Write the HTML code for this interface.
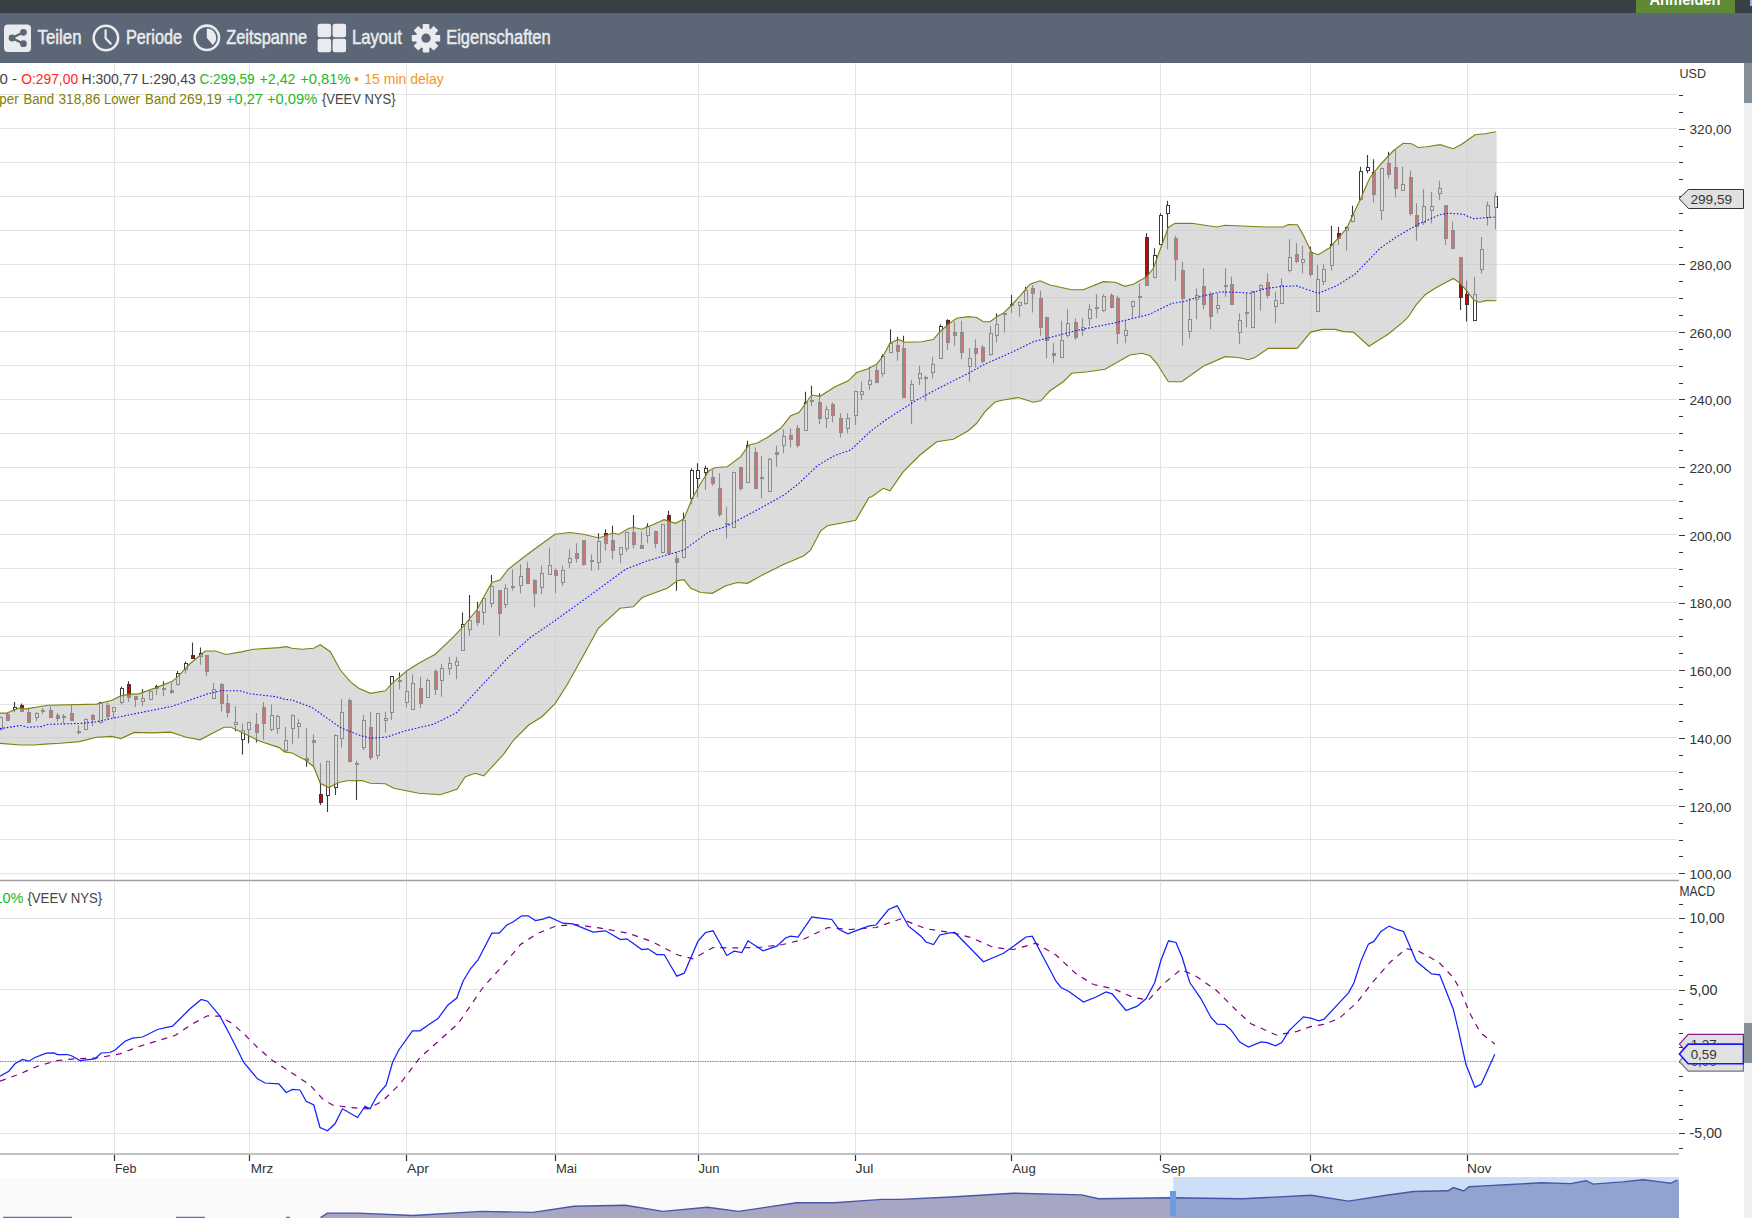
<!DOCTYPE html><html><head><meta charset="utf-8"><style>html,body{margin:0;padding:0;overflow:hidden;background:#fff}svg{display:block}text{font-family:"Liberation Sans", sans-serif}</style></head><body>
<svg width="1752" height="1218" viewBox="0 0 1752 1218">
<rect x="0" y="0" width="1752" height="1218" fill="#fff"/>
<path d="M0 873.5H1677 M0 839.5H1677 M0 805.5H1677 M0 771.5H1677 M0 737.5H1677 M0 704.5H1677 M0 670.5H1677 M0 636.5H1677 M0 602.5H1677 M0 568.5H1677 M0 534.5H1677 M0 500.5H1677 M0 467.5H1677 M0 433.5H1677 M0 399.5H1677 M0 365.5H1677 M0 331.5H1677 M0 297.5H1677 M0 264.5H1677 M0 230.5H1677 M0 196.5H1677 M0 162.5H1677 M0 128.5H1677 M0 94.5H1677 M114.5 63V880 M249.5 63V880 M406.5 63V880 M555.5 63V880 M698.5 63V880 M855.5 63V880 M1011.5 63V880 M1160.5 63V880 M1310.5 63V880 M1467.5 63V880" stroke="#e4e4e4" stroke-width="1" fill="none"/>
<path d="M0.5 716.6V730.3 M7.5 713.1V720.9 M14.5 701.9V712.2 M21.5 703.6V712.2 M28.5 708.8V723.4 M36.5 712.2V720.9 M42.5 707.9V714.0 M50.5 706.2V717.4 M57.5 713.1V721.7 M63.5 714.0V723.4 M71.5 705.3V720.9 M78.5 725.2V734.7 M85.5 718.3V730.3 M92.5 714.0V726.0 M100.5 701.9V723.4 M107.5 702.8V719.1 M113.5 707.1V718.3 M121.5 686.4V704.5 M128.5 681.2V701.9 M135.5 695.9V707.1 M142.5 689.0V706.2 M150.5 690.7V700.2 M156.5 684.7V695.0 M163.5 681.2V695.9 M171.5 682.9V694.1 M177.5 670.9V685.5 M185.5 661.4V673.4 M192.5 642.4V657.9 M200.5 647.6V664.8 M206.5 655.3V676.0 M213.5 682.9V698.4 M221.5 682.9V711.4 M227.5 694.1V717.4 M235.5 706.2V731.2 M242.5 723.4V754.5 M248.5 721.7V743.3 M256.5 713.1V742.4 M263.5 701.9V739.8 M271.5 704.5V731.2 M277.5 714.8V733.8 M285.5 726.9V751.9 M292.5 714.2V744.2 M298.5 719.2V738.3 M306.5 728.3V766.7 M313.5 734.2V766.7 M320.5 763.3V805.0 M327.5 760.8V812.0 M335.5 734.2V795.0 M341.5 699.2V747.5 M349.5 698.3V762.5 M356.5 760.8V800.0 M363.5 715.0V750.0 M370.5 711.7V760.0 M377.5 713.3V759.2 M385.5 711.7V732.5 M391.5 676.7V720.0 M399.5 672.5V689.2 M406.5 671.7V707.5 M412.5 674.2V710.0 M420.5 676.7V708.3 M427.5 678.3V697.5 M435.5 669.2V695.0 M441.5 664.2V696.7 M449.5 656.7V675.0 M456.5 656.7V679.2 M462.5 612.5V650.8 M469.5 595.0V635.8 M477.5 601.7V625.8 M483.5 597.5V625.0 M491.5 575.0V607.5 M499.5 590.0V635.8 M505.5 584.2V608.3 M512.5 569.2V590.8 M520.5 564.2V593.3 M527.5 561.7V583.3 M534.5 579.2V607.5 M541.5 565.8V594.2 M549.5 547.5V575.0 M555.5 568.3V593.3 M562.5 565.8V585.8 M569.5 549.2V568.3 M576.5 543.3V562.5 M583.5 540.8V565.8 M591.5 554.2V570.8 M598.5 533.3V570.0 M605.5 529.2V550.8 M612.5 525.8V559.2 M620.5 547.5V563.3 M626.5 531.7V551.7 M633.5 515.0V548.3 M641.5 531.7V548.3 M647.5 523.3V543.3 M655.5 530.8V548.3 M662.5 524.2V553.3 M668.5 510.8V553.3 M676.5 551.7V590.8 M683.5 512.5V558.3 M691.5 468.3V504.2 M697.5 463.3V497.5 M705.5 465.8V490.0 M712.5 470.0V485.8 M719.5 473.3V516.7 M726.5 506.7V538.3 M733.5 471.7V528.3 M740.5 466.7V490.8 M747.5 440.8V483.3 M755.5 447.5V488.3 M761.5 455.8V498.3 M769.5 457.5V491.7 M776.5 445.8V466.7 M783.5 429.2V453.3 M790.5 428.3V447.5 M797.5 425.0V447.5 M805.5 391.7V430.8 M811.5 385.8V405.8 M819.5 393.3V424.2 M826.5 405.8V428.3 M832.5 402.5V422.5 M840.5 413.3V437.5 M847.5 413.3V433.3 M855.5 390.8V425.0 M861.5 381.7V400.0 M869.5 366.7V390.0 M876.5 365.8V383.3 M882.5 354.2V376.7 M890.5 329.2V353.3 M897.5 336.7V360.8 M903.5 335.8V398.3 M911.5 380.0V424.2 M919.5 365.8V385.0 M925.5 375.8V400.8 M932.5 356.7V378.3 M940.5 324.2V358.3 M947.5 319.2V350.0 M954.5 321.7V345.8 M961.5 320.8V359.2 M969.5 348.3V381.7 M975.5 339.2V367.5 M982.5 345.0V363.3 M990.5 325.8V355.8 M996.5 313.3V342.5 M1004.5 313.3V332.5 M1011.5 295.0V313.3 M1019.5 301.7V316.7 M1025.5 286.7V305.0 M1032.5 285.0V312.5 M1040.5 290.8V335.8 M1046.5 316.7V358.3 M1053.5 343.3V363.3 M1061.5 320.8V357.5 M1067.5 309.2V337.5 M1075.5 318.3V340.0 M1082.5 318.3V335.8 M1089.5 304.2V325.8 M1096.5 294.2V318.3 M1103.5 294.2V311.7 M1111.5 293.3V308.3 M1117.5 295.8V344.2 M1125.5 320.0V343.3 M1132.5 300.8V318.3 M1139.5 283.3V316.7 M1146.5 233.3V285.0 M1154.5 248.3V278.3 M1160.5 213.3V244.2 M1167.5 200.8V249.2 M1175.5 235.8V280.8 M1182.5 261.7V345.8 M1189.5 298.3V338.3 M1196.5 288.3V319.2 M1203.5 268.3V309.2 M1210.5 291.7V329.2 M1217.5 293.3V313.3 M1225.5 268.3V296.7 M1231.5 276.7V305.0 M1239.5 313.3V344.2 M1246.5 293.3V327.5 M1252.5 290.8V328.3 M1260.5 284.2V310.8 M1267.5 273.3V298.3 M1275.5 291.7V323.3 M1281.5 278.3V304.2 M1289.5 239.2V272.5 M1296.5 243.3V263.3 M1302.5 245.8V273.3 M1310.5 246.7V277.5 M1317.5 265.0V311.7 M1323.5 264.2V285.0 M1331.5 225.8V270.8 M1338.5 226.7V245.0 M1346.5 226.7V250.8 M1352.5 205.8V222.5 M1360.5 166.7V200.8 M1367.5 155.0V173.3 M1373.5 159.2V202.5 M1381.5 167.5V220.0 M1388.5 151.7V178.3 M1395.5 149.2V197.5 M1402.5 166.7V190.0 M1410.5 170.8V215.8 M1416.5 203.3V240.8 M1423.5 189.2V225.0 M1431.5 191.7V223.3 M1439.5 180.8V200.0 M1445.5 205.8V245.0 M1452.5 221.7V248.3 M1460.5 257.0V310.0 M1466.5 280.5V321.5 M1474.5 276.8V320.0 M1481.5 237.0V273.5 M1487.5 201.7V225.8 M1495.5 192.5V229.2" stroke="#3a3a3a" stroke-width="1.1" fill="none"/>
<g fill="#fff" stroke="#3a3a3a" stroke-width="1"><rect x="-0.5" y="717.5" width="3" height="12"/><rect x="13.5" y="707.5" width="3" height="2"/><rect x="35.5" y="713.5" width="3" height="4"/><rect x="41.5" y="710.5" width="3" height="1"/><rect x="62.5" y="716.5" width="3" height="1"/><rect x="77.5" y="731.5" width="3" height="1"/><rect x="84.5" y="719.5" width="3" height="10"/><rect x="99.5" y="702.5" width="3" height="20"/><rect x="112.5" y="707.5" width="3" height="4"/><rect x="120.5" y="688.5" width="3" height="14"/><rect x="141.5" y="698.5" width="3" height="3"/><rect x="149.5" y="691.5" width="3" height="8"/><rect x="162.5" y="688.5" width="3" height="1"/><rect x="176.5" y="673.5" width="3" height="11"/><rect x="184.5" y="663.5" width="3" height="6"/><rect x="199.5" y="653.5" width="3" height="3"/><rect x="212.5" y="689.5" width="3" height="9"/><rect x="234.5" y="722.5" width="3" height="2"/><rect x="241.5" y="730.5" width="3" height="9"/><rect x="247.5" y="722.5" width="3" height="7"/><rect x="270.5" y="715.5" width="3" height="14"/><rect x="276.5" y="716.5" width="3" height="12"/><rect x="284.5" y="740.5" width="3" height="10"/><rect x="291.5" y="715.5" width="3" height="13"/><rect x="297.5" y="723.5" width="3" height="3"/><rect x="326.5" y="761.5" width="3" height="34"/><rect x="334.5" y="735.5" width="3" height="52"/><rect x="340.5" y="712.5" width="3" height="26"/><rect x="355.5" y="763.5" width="3" height="1"/><rect x="362.5" y="720.5" width="3" height="27"/><rect x="376.5" y="713.5" width="3" height="42"/><rect x="384.5" y="718.5" width="3" height="2"/><rect x="390.5" y="676.5" width="3" height="36"/><rect x="398.5" y="680.5" width="3" height="1"/><rect x="405.5" y="691.5" width="3" height="11"/><rect x="411.5" y="683.5" width="3" height="26"/><rect x="426.5" y="680.5" width="3" height="17"/><rect x="440.5" y="668.5" width="3" height="12"/><rect x="448.5" y="663.5" width="3" height="5"/><rect x="455.5" y="661.5" width="3" height="4"/><rect x="461.5" y="624.5" width="3" height="26"/><rect x="468.5" y="620.5" width="3" height="9"/><rect x="482.5" y="598.5" width="3" height="14"/><rect x="490.5" y="586.5" width="3" height="17"/><rect x="504.5" y="588.5" width="3" height="16"/><rect x="511.5" y="586.5" width="3" height="1"/><rect x="519.5" y="576.5" width="3" height="9"/><rect x="540.5" y="573.5" width="3" height="14"/><rect x="548.5" y="565.5" width="3" height="9"/><rect x="561.5" y="570.5" width="3" height="12"/><rect x="568.5" y="558.5" width="3" height="4"/><rect x="590.5" y="560.5" width="3" height="1"/><rect x="597.5" y="541.5" width="3" height="21"/><rect x="619.5" y="547.5" width="3" height="7"/><rect x="625.5" y="532.5" width="3" height="16"/><rect x="646.5" y="526.5" width="3" height="9"/><rect x="661.5" y="524.5" width="3" height="28"/><rect x="682.5" y="520.5" width="3" height="37"/><rect x="690.5" y="470.5" width="3" height="28"/><rect x="696.5" y="470.5" width="3" height="8"/><rect x="704.5" y="468.5" width="3" height="4"/><rect x="725.5" y="523.5" width="3" height="1"/><rect x="732.5" y="472.5" width="3" height="55"/><rect x="746.5" y="445.5" width="3" height="37"/><rect x="760.5" y="477.5" width="3" height="1"/><rect x="768.5" y="459.5" width="3" height="32"/><rect x="782.5" y="436.5" width="3" height="9"/><rect x="804.5" y="402.5" width="3" height="28"/><rect x="810.5" y="400.5" width="3" height="1"/><rect x="825.5" y="409.5" width="3" height="9"/><rect x="846.5" y="418.5" width="3" height="10"/><rect x="854.5" y="391.5" width="3" height="24"/><rect x="860.5" y="391.5" width="3" height="3"/><rect x="868.5" y="380.5" width="3" height="4"/><rect x="881.5" y="356.5" width="3" height="17"/><rect x="889.5" y="343.5" width="3" height="9"/><rect x="910.5" y="384.5" width="3" height="16"/><rect x="918.5" y="373.5" width="3" height="5"/><rect x="924.5" y="377.5" width="3" height="1"/><rect x="931.5" y="364.5" width="3" height="8"/><rect x="939.5" y="326.5" width="3" height="32"/><rect x="968.5" y="358.5" width="3" height="8"/><rect x="989.5" y="333.5" width="3" height="21"/><rect x="995.5" y="324.5" width="3" height="11"/><rect x="1003.5" y="313.5" width="3" height="1"/><rect x="1010.5" y="304.5" width="3" height="1"/><rect x="1018.5" y="302.5" width="3" height="3"/><rect x="1024.5" y="290.5" width="3" height="13"/><rect x="1060.5" y="340.5" width="3" height="17"/><rect x="1066.5" y="323.5" width="3" height="12"/><rect x="1081.5" y="327.5" width="3" height="3"/><rect x="1088.5" y="309.5" width="3" height="9"/><rect x="1095.5" y="307.5" width="3" height="1"/><rect x="1102.5" y="296.5" width="3" height="14"/><rect x="1124.5" y="330.5" width="3" height="5"/><rect x="1131.5" y="301.5" width="3" height="5"/><rect x="1138.5" y="296.5" width="3" height="1"/><rect x="1153.5" y="255.5" width="3" height="22"/><rect x="1159.5" y="215.5" width="3" height="29"/><rect x="1166.5" y="205.5" width="3" height="8"/><rect x="1188.5" y="319.5" width="3" height="12"/><rect x="1195.5" y="295.5" width="3" height="4"/><rect x="1216.5" y="305.5" width="3" height="3"/><rect x="1224.5" y="285.5" width="3" height="1"/><rect x="1238.5" y="320.5" width="3" height="12"/><rect x="1245.5" y="312.5" width="3" height="1"/><rect x="1251.5" y="291.5" width="3" height="36"/><rect x="1259.5" y="285.5" width="3" height="3"/><rect x="1274.5" y="300.5" width="3" height="6"/><rect x="1280.5" y="285.5" width="3" height="18"/><rect x="1288.5" y="257.5" width="3" height="13"/><rect x="1301.5" y="259.5" width="3" height="3"/><rect x="1316.5" y="279.5" width="3" height="32"/><rect x="1322.5" y="269.5" width="3" height="12"/><rect x="1330.5" y="244.5" width="3" height="21"/><rect x="1345.5" y="227.5" width="3" height="3"/><rect x="1351.5" y="215.5" width="3" height="6"/><rect x="1359.5" y="171.5" width="3" height="28"/><rect x="1366.5" y="167.5" width="3" height="3"/><rect x="1380.5" y="168.5" width="3" height="42"/><rect x="1401.5" y="184.5" width="3" height="6"/><rect x="1422.5" y="206.5" width="3" height="16"/><rect x="1430.5" y="206.5" width="3" height="4"/><rect x="1438.5" y="188.5" width="3" height="5"/><rect x="1473.5" y="294.5" width="3" height="26"/><rect x="1480.5" y="249.5" width="3" height="20"/><rect x="1486.5" y="205.5" width="3" height="12"/><rect x="1494.5" y="196.5" width="3" height="11"/></g>
<g fill="#d40000" stroke="#3a3a3a" stroke-width="1"><rect x="6.5" y="714.5" width="3" height="6"/><rect x="20.5" y="705.5" width="3" height="6"/><rect x="27.5" y="712.5" width="3" height="10"/><rect x="49.5" y="710.5" width="3" height="7"/><rect x="56.5" y="715.5" width="3" height="3"/><rect x="70.5" y="713.5" width="3" height="7"/><rect x="91.5" y="715.5" width="3" height="4"/><rect x="106.5" y="705.5" width="3" height="11"/><rect x="127.5" y="684.5" width="3" height="13"/><rect x="134.5" y="696.5" width="3" height="3"/><rect x="155.5" y="686.5" width="3" height="2"/><rect x="170.5" y="690.5" width="3" height="2"/><rect x="191.5" y="655.5" width="3" height="3"/><rect x="205.5" y="655.5" width="3" height="16"/><rect x="220.5" y="684.5" width="3" height="19"/><rect x="226.5" y="703.5" width="3" height="9"/><rect x="255.5" y="724.5" width="3" height="8"/><rect x="262.5" y="707.5" width="3" height="16"/><rect x="305.5" y="758.5" width="3" height="2"/><rect x="312.5" y="740.5" width="3" height="2"/><rect x="319.5" y="794.5" width="3" height="8"/><rect x="348.5" y="700.5" width="3" height="61"/><rect x="369.5" y="727.5" width="3" height="30"/><rect x="419.5" y="688.5" width="3" height="15"/><rect x="434.5" y="671.5" width="3" height="18"/><rect x="476.5" y="611.5" width="3" height="11"/><rect x="498.5" y="590.5" width="3" height="23"/><rect x="526.5" y="568.5" width="3" height="15"/><rect x="533.5" y="580.5" width="3" height="13"/><rect x="554.5" y="570.5" width="3" height="5"/><rect x="575.5" y="553.5" width="3" height="5"/><rect x="582.5" y="540.5" width="3" height="24"/><rect x="604.5" y="533.5" width="3" height="10"/><rect x="611.5" y="540.5" width="3" height="10"/><rect x="632.5" y="532.5" width="3" height="12"/><rect x="640.5" y="545.5" width="3" height="3"/><rect x="654.5" y="531.5" width="3" height="12"/><rect x="667.5" y="515.5" width="3" height="38"/><rect x="675.5" y="558.5" width="3" height="4"/><rect x="711.5" y="477.5" width="3" height="6"/><rect x="718.5" y="488.5" width="3" height="26"/><rect x="739.5" y="467.5" width="3" height="21"/><rect x="754.5" y="452.5" width="3" height="36"/><rect x="775.5" y="452.5" width="3" height="2"/><rect x="789.5" y="435.5" width="3" height="4"/><rect x="796.5" y="428.5" width="3" height="17"/><rect x="818.5" y="402.5" width="3" height="16"/><rect x="831.5" y="404.5" width="3" height="11"/><rect x="839.5" y="418.5" width="3" height="14"/><rect x="875.5" y="370.5" width="3" height="12"/><rect x="896.5" y="345.5" width="3" height="6"/><rect x="902.5" y="348.5" width="3" height="49"/><rect x="946.5" y="320.5" width="3" height="22"/><rect x="953.5" y="332.5" width="3" height="3"/><rect x="960.5" y="332.5" width="3" height="20"/><rect x="974.5" y="348.5" width="3" height="5"/><rect x="981.5" y="347.5" width="3" height="14"/><rect x="1031.5" y="288.5" width="3" height="5"/><rect x="1039.5" y="298.5" width="3" height="29"/><rect x="1045.5" y="317.5" width="3" height="23"/><rect x="1052.5" y="353.5" width="3" height="2"/><rect x="1074.5" y="322.5" width="3" height="15"/><rect x="1110.5" y="295.5" width="3" height="12"/><rect x="1116.5" y="298.5" width="3" height="35"/><rect x="1145.5" y="237.5" width="3" height="48"/><rect x="1174.5" y="238.5" width="3" height="21"/><rect x="1181.5" y="270.5" width="3" height="28"/><rect x="1202.5" y="286.5" width="3" height="18"/><rect x="1209.5" y="294.5" width="3" height="22"/><rect x="1230.5" y="284.5" width="3" height="20"/><rect x="1266.5" y="282.5" width="3" height="13"/><rect x="1295.5" y="254.5" width="3" height="7"/><rect x="1309.5" y="252.5" width="3" height="22"/><rect x="1337.5" y="233.5" width="3" height="5"/><rect x="1372.5" y="172.5" width="3" height="22"/><rect x="1387.5" y="163.5" width="3" height="11"/><rect x="1394.5" y="167.5" width="3" height="21"/><rect x="1409.5" y="177.5" width="3" height="36"/><rect x="1415.5" y="215.5" width="3" height="11"/><rect x="1444.5" y="205.5" width="3" height="33"/><rect x="1451.5" y="230.5" width="3" height="18"/><rect x="1459.5" y="257.5" width="3" height="40"/><rect x="1465.5" y="294.5" width="3" height="10"/></g>
<polygon points="0.0,713.1 6.9,713.1 19.0,708.0 25.9,708.8 48.3,705.3 96.6,704.1 112.0,700.2 120.7,695.9 131.0,694.1 138.0,694.1 155.0,688.1 172.4,681.2 177.6,676.9 189.7,664.0 205.2,651.0 215.5,651.0 225.9,654.5 241.4,651.9 253.4,649.3 279.3,647.6 286.2,646.7 292.0,648.3 302.0,649.2 313.7,648.3 320.3,644.7 330.3,651.7 340.3,670.0 350.3,681.7 358.7,688.3 370.3,693.3 385.3,690.8 392.0,683.3 407.0,670.8 418.7,663.3 435.3,654.2 453.7,636.7 463.7,625.8 476.7,610.0 491.7,582.5 500.0,580.0 508.3,569.2 523.3,557.5 536.7,547.5 555.0,534.2 570.0,532.5 583.3,534.2 599.0,538.0 612.3,533.3 619.0,534.2 629.0,528.3 634.0,527.5 641.5,529.2 654.0,524.2 664.0,519.7 675.7,523.3 684.0,518.7 692.3,498.3 700.7,483.3 709.0,470.8 715.7,467.5 727.3,466.7 740.7,456.7 749.0,445.0 757.3,443.0 767.3,437.5 780.7,428.3 790.7,415.8 799.0,412.5 811.7,395.0 820.0,396.3 835.0,386.7 848.3,380.8 856.7,372.5 866.7,369.2 876.7,364.2 883.3,355.8 890.0,343.3 898.3,339.5 905.0,342.2 921.7,341.7 933.3,339.5 940.0,331.7 948.3,324.2 956.7,318.3 968.3,316.7 976.7,317.5 983.3,321.7 990.0,321.7 996.7,316.7 1003.3,313.3 1011.7,305.0 1020.0,295.8 1030.0,284.2 1040.0,280.8 1050.0,285.0 1071.7,289.7 1083.3,289.7 1103.3,281.7 1115.0,282.2 1125.0,286.3 1133.3,284.2 1146.7,276.7 1153.3,268.3 1160.0,250.0 1168.3,227.5 1175.0,223.3 1191.7,223.3 1216.7,227.0 1225.0,225.3 1265.0,227.0 1283.3,227.0 1288.3,224.5 1297.5,224.7 1303.3,235.0 1311.7,252.5 1318.3,254.7 1330.0,247.5 1346.7,228.3 1360.0,200.0 1370.0,177.5 1380.0,165.0 1393.3,150.8 1403.3,143.3 1411.7,143.8 1418.3,147.5 1426.7,146.7 1440.0,144.7 1453.3,148.7 1461.7,144.2 1475.0,134.7 1485.0,133.7 1495.8,131.7 1496.6,131.7 1496.6,300.8 1496.4,300.8 1485.7,300.6 1480.0,302.2 1474.2,300.6 1466.8,290.8 1459.4,282.5 1453.3,278.4 1436.4,287.5 1425.2,294.7 1416.5,304.4 1407.8,317.5 1402.0,322.9 1388.4,334.0 1369.0,346.2 1353.4,332.1 1343.7,331.6 1335.0,329.4 1322.4,329.4 1310.8,332.1 1297.2,348.4 1268.3,348.3 1255.0,357.5 1248.3,359.7 1238.3,357.5 1225.0,356.7 1203.3,366.3 1181.7,381.7 1168.3,381.7 1156.7,363.3 1150.0,355.8 1141.7,353.3 1130.0,355.0 1105.0,369.2 1088.3,371.7 1071.7,373.3 1063.3,381.7 1050.0,390.8 1040.8,400.8 1033.3,402.2 1018.3,397.5 1003.3,400.0 995.0,402.0 985.0,411.7 976.7,423.3 968.3,430.8 953.3,439.2 936.7,441.7 920.0,455.0 903.3,471.7 890.0,490.8 883.3,488.3 871.7,496.7 869.0,497.5 855.7,520.3 840.7,523.3 827.3,525.8 820.7,530.8 810.7,550.0 804.0,555.8 784.0,564.2 764.0,574.2 747.3,583.3 737.3,582.5 725.7,585.8 712.3,593.3 700.7,592.5 690.7,588.3 684.0,579.7 677.3,580.8 667.3,588.3 655.7,592.5 642.3,597.5 633.3,606.7 620.0,608.3 598.3,628.3 583.7,655.0 567.0,685.0 555.3,703.3 542.0,716.7 528.7,725.0 513.7,740.0 503.7,754.2 483.7,775.8 475.3,773.3 465.3,776.7 457.0,789.2 440.3,794.7 418.7,793.3 393.7,788.3 385.3,783.7 370.3,783.3 362.0,780.5 347.0,780.8 338.7,782.5 328.7,787.5 320.3,783.3 313.7,766.7 305.3,760.0 292.0,753.0 284.5,751.9 279.3,747.6 258.6,740.7 248.3,735.5 231.0,727.2 224.1,727.2 200.0,739.8 186.2,737.2 170.7,732.1 151.7,732.9 134.5,732.4 120.7,738.6 112.0,736.4 96.6,737.2 79.3,741.6 60.3,743.3 44.8,744.1 34.5,745.0 20.7,745.0 0.0,743.3" fill="rgb(197,197,197)" fill-opacity="0.6" stroke="none"/>
<polyline points="0.0,713.1 6.9,713.1 19.0,708.0 25.9,708.8 48.3,705.3 96.6,704.1 112.0,700.2 120.7,695.9 131.0,694.1 138.0,694.1 155.0,688.1 172.4,681.2 177.6,676.9 189.7,664.0 205.2,651.0 215.5,651.0 225.9,654.5 241.4,651.9 253.4,649.3 279.3,647.6 286.2,646.7 292.0,648.3 302.0,649.2 313.7,648.3 320.3,644.7 330.3,651.7 340.3,670.0 350.3,681.7 358.7,688.3 370.3,693.3 385.3,690.8 392.0,683.3 407.0,670.8 418.7,663.3 435.3,654.2 453.7,636.7 463.7,625.8 476.7,610.0 491.7,582.5 500.0,580.0 508.3,569.2 523.3,557.5 536.7,547.5 555.0,534.2 570.0,532.5 583.3,534.2 599.0,538.0 612.3,533.3 619.0,534.2 629.0,528.3 634.0,527.5 641.5,529.2 654.0,524.2 664.0,519.7 675.7,523.3 684.0,518.7 692.3,498.3 700.7,483.3 709.0,470.8 715.7,467.5 727.3,466.7 740.7,456.7 749.0,445.0 757.3,443.0 767.3,437.5 780.7,428.3 790.7,415.8 799.0,412.5 811.7,395.0 820.0,396.3 835.0,386.7 848.3,380.8 856.7,372.5 866.7,369.2 876.7,364.2 883.3,355.8 890.0,343.3 898.3,339.5 905.0,342.2 921.7,341.7 933.3,339.5 940.0,331.7 948.3,324.2 956.7,318.3 968.3,316.7 976.7,317.5 983.3,321.7 990.0,321.7 996.7,316.7 1003.3,313.3 1011.7,305.0 1020.0,295.8 1030.0,284.2 1040.0,280.8 1050.0,285.0 1071.7,289.7 1083.3,289.7 1103.3,281.7 1115.0,282.2 1125.0,286.3 1133.3,284.2 1146.7,276.7 1153.3,268.3 1160.0,250.0 1168.3,227.5 1175.0,223.3 1191.7,223.3 1216.7,227.0 1225.0,225.3 1265.0,227.0 1283.3,227.0 1288.3,224.5 1297.5,224.7 1303.3,235.0 1311.7,252.5 1318.3,254.7 1330.0,247.5 1346.7,228.3 1360.0,200.0 1370.0,177.5 1380.0,165.0 1393.3,150.8 1403.3,143.3 1411.7,143.8 1418.3,147.5 1426.7,146.7 1440.0,144.7 1453.3,148.7 1461.7,144.2 1475.0,134.7 1485.0,133.7 1495.8,131.7" fill="none" stroke="#808010" stroke-width="1.15"/>
<polyline points="0.0,743.3 20.7,745.0 34.5,745.0 44.8,744.1 60.3,743.3 79.3,741.6 96.6,737.2 112.0,736.4 120.7,738.6 134.5,732.4 151.7,732.9 170.7,732.1 186.2,737.2 200.0,739.8 224.1,727.2 231.0,727.2 248.3,735.5 258.6,740.7 279.3,747.6 284.5,751.9 292.0,753.0 305.3,760.0 313.7,766.7 320.3,783.3 328.7,787.5 338.7,782.5 347.0,780.8 362.0,780.5 370.3,783.3 385.3,783.7 393.7,788.3 418.7,793.3 440.3,794.7 457.0,789.2 465.3,776.7 475.3,773.3 483.7,775.8 503.7,754.2 513.7,740.0 528.7,725.0 542.0,716.7 555.3,703.3 567.0,685.0 583.7,655.0 598.3,628.3 620.0,608.3 633.3,606.7 642.3,597.5 655.7,592.5 667.3,588.3 677.3,580.8 684.0,579.7 690.7,588.3 700.7,592.5 712.3,593.3 725.7,585.8 737.3,582.5 747.3,583.3 764.0,574.2 784.0,564.2 804.0,555.8 810.7,550.0 820.7,530.8 827.3,525.8 840.7,523.3 855.7,520.3 869.0,497.5 871.7,496.7 883.3,488.3 890.0,490.8 903.3,471.7 920.0,455.0 936.7,441.7 953.3,439.2 968.3,430.8 976.7,423.3 985.0,411.7 995.0,402.0 1003.3,400.0 1018.3,397.5 1033.3,402.2 1040.8,400.8 1050.0,390.8 1063.3,381.7 1071.7,373.3 1088.3,371.7 1105.0,369.2 1130.0,355.0 1141.7,353.3 1150.0,355.8 1156.7,363.3 1168.3,381.7 1181.7,381.7 1203.3,366.3 1225.0,356.7 1238.3,357.5 1248.3,359.7 1255.0,357.5 1268.3,348.3 1297.2,348.4 1310.8,332.1 1322.4,329.4 1335.0,329.4 1343.7,331.6 1353.4,332.1 1369.0,346.2 1388.4,334.0 1402.0,322.9 1407.8,317.5 1416.5,304.4 1425.2,294.7 1436.4,287.5 1453.3,278.4 1459.4,282.5 1466.8,290.8 1474.2,300.6 1480.0,302.2 1485.7,300.6 1496.4,300.8" fill="none" stroke="#808010" stroke-width="1.15"/>
<polyline points="0.0,728.6 20.7,725.5 27.6,727.2 41.4,726.6 48.3,724.3 81.0,723.4 96.6,721.7 120.7,716.6 155.2,709.7 172.4,706.2 189.7,700.2 206.9,694.1 220.7,690.7 239.7,690.7 250.0,693.8 275.9,696.7 284.5,699.3 292.0,700.0 312.0,707.5 340.3,727.5 358.7,735.0 370.3,738.3 387.0,737.0 405.3,730.8 433.7,724.2 457.0,712.5 475.3,692.5 508.7,656.7 530.3,637.5 548.7,625.0 583.7,600.0 625.7,569.2 647.3,560.8 684.0,550.0 709.0,531.7 725.7,526.7 755.7,510.8 784.0,495.0 799.0,483.3 817.3,465.8 834.0,455.8 850.7,450.0 870.0,431.7 886.7,419.2 916.7,400.0 941.7,386.7 966.7,374.2 983.3,365.0 1016.7,350.0 1033.3,341.7 1050.0,337.5 1075.0,330.8 1116.7,322.5 1150.0,314.2 1171.7,303.3 1183.3,301.7 1200.0,296.7 1220.0,292.0 1241.7,292.5 1250.0,293.3 1266.7,288.3 1280.0,286.7 1296.7,285.8 1318.3,293.3 1336.7,285.8 1355.0,274.2 1380.0,248.3 1396.7,236.7 1418.3,224.2 1440.0,214.7 1448.3,213.3 1463.3,214.2 1473.3,218.7 1488.3,217.5 1495.8,217.0" fill="none" stroke="#1010ff" stroke-width="1.1" stroke-dasharray="1.6 1.8"/>
<path d="M0 880.5H1679" stroke="#a0a0a0" stroke-width="1.3"/>
<text x="-0.5" y="83.7" font-size="14" fill="#444444" textLength="17.5" lengthAdjust="spacingAndGlyphs">0 -</text>
<text x="21.2" y="83.7" font-size="14" fill="#ff1f1f" textLength="56.9" lengthAdjust="spacingAndGlyphs">O:297,00</text>
<text x="81.6" y="83.7" font-size="14" fill="#444444" textLength="56.6" lengthAdjust="spacingAndGlyphs">H:300,77</text>
<text x="141.6" y="83.7" font-size="14" fill="#444444" textLength="54" lengthAdjust="spacingAndGlyphs">L:290,43</text>
<text x="199.4" y="83.7" font-size="14" fill="#1cb81c" textLength="55.3" lengthAdjust="spacingAndGlyphs">C:299,59</text>
<text x="259.5" y="83.7" font-size="14" fill="#1cb81c" textLength="36" lengthAdjust="spacingAndGlyphs">+2,42</text>
<text x="300.3" y="83.7" font-size="14" fill="#1cb81c" textLength="50.2" lengthAdjust="spacingAndGlyphs">+0,81%</text>
<text x="354" y="83.7" font-size="14" fill="#f7941d">•</text>
<text x="364.3" y="83.7" font-size="14" fill="#f7941d" textLength="79.5" lengthAdjust="spacingAndGlyphs">15 min delay</text>
<text x="-0.7" y="103.6" font-size="14" fill="#808000" textLength="19.3" lengthAdjust="spacingAndGlyphs">per</text>
<text x="23.4" y="103.6" font-size="14" fill="#808000" textLength="30.8" lengthAdjust="spacingAndGlyphs">Band</text>
<text x="58.5" y="103.6" font-size="14" fill="#808000" textLength="41.8" lengthAdjust="spacingAndGlyphs">318,86</text>
<text x="103.9" y="103.6" font-size="14" fill="#808000" textLength="36" lengthAdjust="spacingAndGlyphs">Lower</text>
<text x="145.1" y="103.6" font-size="14" fill="#808000" textLength="30.8" lengthAdjust="spacingAndGlyphs">Band</text>
<text x="179.3" y="103.6" font-size="14" fill="#808000" textLength="42.5" lengthAdjust="spacingAndGlyphs">269,19</text>
<text x="226.1" y="103.6" font-size="14" fill="#1cb81c" textLength="36.8" lengthAdjust="spacingAndGlyphs">+0,27</text>
<text x="267" y="103.6" font-size="14" fill="#1cb81c" textLength="50.2" lengthAdjust="spacingAndGlyphs">+0,09%</text>
<text x="322" y="103.6" font-size="14" fill="#444444" textLength="73.5" lengthAdjust="spacingAndGlyphs">{VEEV NYS}</text>
<path d="M1679 873.5h6 M1679 856.5h4 M1679 840.5h4 M1679 823.5h4 M1679 806.5h6 M1679 789.5h4 M1679 772.5h4 M1679 755.5h4 M1679 738.5h6 M1679 721.5h4 M1679 704.5h4 M1679 687.5h4 M1679 670.5h6 M1679 653.5h4 M1679 636.5h4 M1679 619.5h4 M1679 603.5h6 M1679 586.5h4 M1679 569.5h4 M1679 552.5h4 M1679 535.5h6 M1679 518.5h4 M1679 501.5h4 M1679 484.5h4 M1679 467.5h6 M1679 450.5h4 M1679 433.5h4 M1679 416.5h4 M1679 399.5h6 M1679 383.5h4 M1679 366.5h4 M1679 349.5h4 M1679 332.5h6 M1679 315.5h4 M1679 298.5h4 M1679 281.5h4 M1679 264.5h6 M1679 247.5h4 M1679 230.5h4 M1679 213.5h4 M1679 196.5h6 M1679 179.5h4 M1679 162.5h4 M1679 146.5h4 M1679 129.5h6 M1679 112.5h4 M1679 95.5h4" stroke="#333" stroke-width="1.2"/>
<text x="1689.5" y="879.1999999999999" font-size="13.5" fill="#333" textLength="41.8" lengthAdjust="spacingAndGlyphs">100,00</text>
<text x="1689.5" y="811.5" font-size="13.5" fill="#333" textLength="41.8" lengthAdjust="spacingAndGlyphs">120,00</text>
<text x="1689.5" y="743.8" font-size="13.5" fill="#333" textLength="41.8" lengthAdjust="spacingAndGlyphs">140,00</text>
<text x="1689.5" y="676.0999999999999" font-size="13.5" fill="#333" textLength="41.8" lengthAdjust="spacingAndGlyphs">160,00</text>
<text x="1689.5" y="608.4" font-size="13.5" fill="#333" textLength="41.8" lengthAdjust="spacingAndGlyphs">180,00</text>
<text x="1689.5" y="540.5999999999999" font-size="13.5" fill="#333" textLength="41.8" lengthAdjust="spacingAndGlyphs">200,00</text>
<text x="1689.5" y="472.90000000000003" font-size="13.5" fill="#333" textLength="41.8" lengthAdjust="spacingAndGlyphs">220,00</text>
<text x="1689.5" y="405.2" font-size="13.5" fill="#333" textLength="41.8" lengthAdjust="spacingAndGlyphs">240,00</text>
<text x="1689.5" y="337.5" font-size="13.5" fill="#333" textLength="41.8" lengthAdjust="spacingAndGlyphs">260,00</text>
<text x="1689.5" y="269.8" font-size="13.5" fill="#333" textLength="41.8" lengthAdjust="spacingAndGlyphs">280,00</text>
<text x="1689.5" y="202.10000000000002" font-size="13.5" fill="#333" textLength="41.8" lengthAdjust="spacingAndGlyphs">300,00</text>
<text x="1689.5" y="134.4" font-size="13.5" fill="#333" textLength="41.8" lengthAdjust="spacingAndGlyphs">320,00</text>
<text x="1679.5" y="77.8" font-size="13.5" fill="#333" textLength="26.5" lengthAdjust="spacingAndGlyphs">USD</text>
<polygon points="1679,198.5 1688.5,189.5 1743.5,189.5 1743.5,208.5 1688.5,208.5" fill="#e0e0e0" stroke="#333" stroke-width="1"/>
<text x="1690.5" y="204" font-size="13.5" fill="#333" textLength="41.5" lengthAdjust="spacingAndGlyphs">299,59</text>
<path d="M0 918.5H1677 M0 989.5H1677 M0 1061.5H1677 M0 1133.5H1677 M114.5 882V1154 M249.5 882V1154 M406.5 882V1154 M555.5 882V1154 M698.5 882V1154 M855.5 882V1154 M1011.5 882V1154 M1160.5 882V1154 M1310.5 882V1154 M1467.5 882V1154" stroke="#e4e4e4" stroke-width="1" fill="none"/>
<path d="M0 1061.5H1495" stroke="#777" stroke-width="1" stroke-dasharray="1.2 1.3"/>
<polyline points="0.0,1081.2 20.0,1073.8 37.5,1066.2 57.5,1060.5 75.0,1058.8 97.5,1058.0 120.0,1053.8 140.0,1046.2 175.0,1035.5 192.5,1023.8 207.5,1015.8 220.0,1016.2 232.5,1023.8 245.0,1035.0 257.5,1047.5 272.5,1060.5 295.0,1075.0 310.0,1085.0 322.5,1098.8 332.5,1105.0 350.0,1107.5 367.5,1108.8 382.5,1101.2 400.0,1083.8 420.0,1057.5 441.8,1038.2 458.0,1023.8 483.0,987.5 505.5,962.5 520.5,944.5 538.0,933.2 555.5,926.2 575.5,924.5 600.5,928.2 628.0,933.2 653.0,942.0 678.0,955.0 693.0,958.8 713.0,947.5 730.5,948.0 758.0,947.5 783.0,944.5 803.0,939.5 828.0,927.5 850.5,929.5 876.0,927.5 901.0,918.8 926.0,928.8 951.0,932.5 971.0,937.5 993.5,947.5 1013.5,949.5 1036.0,943.2 1056.0,955.0 1076.0,973.8 1093.5,984.5 1113.5,988.8 1133.5,997.5 1148.5,1000.0 1163.5,983.8 1181.0,969.5 1196.0,976.2 1216.0,990.0 1236.0,1010.0 1251.0,1023.8 1276.3,1035.0 1296.1,1031.7 1310.6,1026.7 1325.0,1024.1 1339.5,1018.2 1357.5,1001.9 1372.0,983.0 1390.1,962.2 1406.3,948.6 1419.0,951.4 1438.8,962.2 1453.3,977.5 1460.5,990.2 1469.5,1012.8 1480.4,1032.6 1494.8,1044.0" fill="none" stroke="#800080" stroke-width="1.2" stroke-dasharray="6 6"/>
<polyline points="0.0,1076.2 8.8,1071.2 15.0,1063.8 22.5,1059.5 28.8,1061.2 35.0,1057.5 46.2,1053.2 53.8,1053.0 57.5,1054.5 67.5,1054.5 72.5,1056.2 80.0,1060.5 95.0,1058.8 101.2,1053.0 110.0,1052.5 115.0,1050.0 125.0,1041.2 132.5,1038.2 142.5,1037.0 157.5,1029.5 172.5,1026.2 190.0,1008.8 201.2,999.5 207.5,1001.2 220.0,1016.2 230.0,1035.0 243.8,1062.5 257.5,1078.8 265.0,1083.0 278.8,1083.8 286.2,1092.5 292.5,1089.5 300.0,1090.0 306.2,1101.2 313.8,1105.0 320.0,1127.5 327.5,1130.8 335.0,1123.8 342.5,1108.8 357.5,1117.5 365.0,1106.2 370.0,1108.8 377.5,1095.0 386.2,1085.0 392.5,1062.5 398.8,1050.0 412.5,1030.8 420.0,1030.8 430.0,1023.8 438.0,1018.5 448.0,1005.0 456.8,998.0 463.0,981.2 470.5,968.8 478.0,960.0 491.8,933.2 499.2,933.2 506.8,925.0 513.0,922.0 521.8,915.8 528.0,915.8 535.5,920.5 543.0,919.2 549.2,917.0 563.0,923.2 573.0,923.8 593.0,932.0 605.5,930.8 620.5,939.5 626.8,938.8 641.8,949.5 648.0,948.8 656.8,954.5 664.2,954.5 676.8,976.2 684.2,973.2 698.0,941.2 705.5,932.5 713.0,930.8 726.8,955.5 734.2,951.2 741.8,952.5 748.0,940.8 763.0,950.8 776.8,946.2 785.5,938.0 790.5,936.2 798.0,937.0 811.8,917.0 820.5,918.2 831.8,919.5 839.2,929.5 848.0,933.8 855.5,930.8 869.2,925.8 876.0,925.0 888.5,909.5 897.2,905.8 908.5,926.2 921.0,936.2 926.0,942.0 933.5,944.5 939.8,935.0 948.5,933.2 954.8,932.5 983.5,961.8 1003.5,953.2 1013.5,946.2 1026.0,937.0 1032.2,936.2 1056.0,981.2 1061.0,987.5 1068.5,991.2 1083.5,1002.0 1096.0,997.0 1106.0,992.0 1112.2,993.8 1126.0,1010.5 1137.2,1006.2 1146.0,998.8 1154.8,982.5 1161.0,960.0 1168.5,940.8 1176.0,942.5 1182.2,957.5 1189.8,982.5 1201.0,998.8 1211.0,1017.5 1217.2,1024.2 1224.8,1024.5 1231.0,1030.0 1239.8,1042.0 1248.5,1047.0 1261.0,1042.0 1267.2,1042.6 1275.4,1045.8 1281.7,1042.6 1288.9,1030.8 1303.4,1016.9 1310.6,1018.2 1318.7,1020.9 1324.1,1019.1 1335.9,1006.4 1348.5,992.9 1353.9,983.0 1361.2,960.4 1368.4,944.1 1373.8,941.4 1381.0,931.5 1389.2,926.1 1397.3,929.7 1403.6,931.5 1416.3,961.3 1431.6,973.9 1439.7,974.8 1453.3,1009.2 1458.7,1031.7 1465.9,1064.2 1475.0,1087.4 1481.3,1084.1 1494.8,1054.3" fill="none" stroke="#1020ff" stroke-width="1.25"/>
<text x="-5.6" y="902.8" font-size="14" fill="#1cb81c" textLength="29" lengthAdjust="spacingAndGlyphs">10%</text>
<text x="27.4" y="902.8" font-size="14" fill="#444444" textLength="74.8" lengthAdjust="spacingAndGlyphs">{VEEV NYS}</text>
<path d="M1679 1148.5h4 M1679 1133.5h6 M1679 1119.5h4 M1679 1105.5h4 M1679 1090.5h4 M1679 1076.5h4 M1679 1062.5h6 M1679 1047.5h4 M1679 1033.5h4 M1679 1019.5h4 M1679 1004.5h4 M1679 990.5h6 M1679 975.5h4 M1679 961.5h4 M1679 947.5h4 M1679 932.5h4 M1679 918.5h6 M1679 904.5h4" stroke="#333" stroke-width="1.2"/>
<text x="1679.5" y="895.5" font-size="13.8" fill="#333" textLength="35.5" lengthAdjust="spacingAndGlyphs">MACD</text>
<text x="1689.5" y="922.9" font-size="13.8" fill="#333" textLength="35" lengthAdjust="spacingAndGlyphs">10,00</text>
<text x="1689.5" y="994.6999999999999" font-size="13.8" fill="#333" textLength="28" lengthAdjust="spacingAndGlyphs">5,00</text>
<text x="1689.5" y="1138.3000000000002" font-size="13.8" fill="#333" textLength="32.5" lengthAdjust="spacingAndGlyphs">-5,00</text>
<polygon points="1679.4,1061.4 1688.2,1051.5 1743.4,1051.5 1743.4,1071.2 1688.2,1071.2" fill="#e0e0e0" stroke="#777" stroke-width="1.2"/>
<text x="1690.7" y="1066.3" font-size="13.5" fill="#333" textLength="26" lengthAdjust="spacingAndGlyphs">0,00</text>
<polygon points="1679.4,1044.1 1688.2,1034.3 1743.4,1034.3 1743.4,1054 1688.2,1054" fill="#e0e0e0" stroke="#8b1a8b" stroke-width="1.2"/>
<text x="1690.7" y="1049" font-size="13.5" fill="#333" textLength="26" lengthAdjust="spacingAndGlyphs">1,27</text>
<polygon points="1679.4,1054 1688.2,1044.1 1743.4,1044.1 1743.4,1063.8 1688.2,1063.8" fill="#e2e2e2" stroke="#1818ff" stroke-width="1.6"/>
<text x="1690.7" y="1059" font-size="13.5" fill="#333" textLength="26" lengthAdjust="spacingAndGlyphs">0,59</text>
<path d="M0 1154H1679" stroke="#aaa" stroke-width="1.4"/>
<path d="M114.5 1155V1161 M249.5 1155V1161 M406.5 1155V1161 M555.5 1155V1161 M698.5 1155V1161 M855.5 1155V1161 M1011.5 1155V1161 M1160.5 1155V1161 M1310.5 1155V1161 M1467.5 1155V1161" stroke="#333" stroke-width="1.2"/>
<text x="115" y="1173.3" font-size="13.5" fill="#333" textLength="21.5" lengthAdjust="spacingAndGlyphs">Feb</text>
<text x="250.7" y="1173.3" font-size="13.5" fill="#333" textLength="22.5" lengthAdjust="spacingAndGlyphs">Mrz</text>
<text x="407" y="1173.3" font-size="13.5" fill="#333" textLength="22" lengthAdjust="spacingAndGlyphs">Apr</text>
<text x="556" y="1173.3" font-size="13.5" fill="#333" textLength="21" lengthAdjust="spacingAndGlyphs">Mai</text>
<text x="698.5" y="1173.3" font-size="13.5" fill="#333" textLength="21" lengthAdjust="spacingAndGlyphs">Jun</text>
<text x="855.5" y="1173.3" font-size="13.5" fill="#333" textLength="18" lengthAdjust="spacingAndGlyphs">Jul</text>
<text x="1012.3" y="1173.3" font-size="13.5" fill="#333" textLength="23.5" lengthAdjust="spacingAndGlyphs">Aug</text>
<text x="1161.7" y="1173.3" font-size="13.5" fill="#333" textLength="23.5" lengthAdjust="spacingAndGlyphs">Sep</text>
<text x="1310.5" y="1173.3" font-size="13.5" fill="#333" textLength="22.5" lengthAdjust="spacingAndGlyphs">Okt</text>
<text x="1467" y="1173.3" font-size="13.5" fill="#333" textLength="24.5" lengthAdjust="spacingAndGlyphs">Nov</text>
<rect x="0" y="1178" width="1679" height="41" fill="#fafafa"/>
<rect x="1173.3" y="1177" width="505.7" height="41" fill="#cddff7"/>
<polygon points="320.5,1217.5 327.4,1213.1 358.2,1213.1 413.0,1215.5 481.5,1211.4 532.9,1212.4 574.0,1206.2 625.3,1205.2 663.0,1211.4 707.5,1207.3 738.4,1211.4 796.6,1202.8 834.2,1202.8 882.2,1199.4 900.0,1199.4 951.4,1197.0 1013.0,1193.2 1081.5,1194.9 1098.6,1198.7 1170.5,1197.7 1242.5,1198.7 1311.0,1195.3 1348.6,1201.1 1386.3,1195.3 1413.7,1191.5 1448.0,1190.8 1453.4,1187.6 1463.8,1191.0 1469.0,1186.7 1484.5,1185.9 1510.3,1184.5 1541.4,1182.8 1570.7,1183.6 1586.2,1180.7 1593.1,1184.1 1622.4,1181.9 1643.1,1179.7 1656.9,1181.4 1670.7,1183.3 1677.2,1180.2 1679.0,1180.2 1679.0,1218.0 320.0,1218.0" fill="#a7a7c4"/>
<clipPath id="hl"><rect x="1173.3" y="1170" width="506" height="50"/></clipPath>
<polygon clip-path="url(#hl)" points="320.5,1217.5 327.4,1213.1 358.2,1213.1 413.0,1215.5 481.5,1211.4 532.9,1212.4 574.0,1206.2 625.3,1205.2 663.0,1211.4 707.5,1207.3 738.4,1211.4 796.6,1202.8 834.2,1202.8 882.2,1199.4 900.0,1199.4 951.4,1197.0 1013.0,1193.2 1081.5,1194.9 1098.6,1198.7 1170.5,1197.7 1242.5,1198.7 1311.0,1195.3 1348.6,1201.1 1386.3,1195.3 1413.7,1191.5 1448.0,1190.8 1453.4,1187.6 1463.8,1191.0 1469.0,1186.7 1484.5,1185.9 1510.3,1184.5 1541.4,1182.8 1570.7,1183.6 1586.2,1180.7 1593.1,1184.1 1622.4,1181.9 1643.1,1179.7 1656.9,1181.4 1670.7,1183.3 1677.2,1180.2 1679.0,1180.2 1679.0,1218.0 320.0,1218.0" fill="#93a3cf"/>
<polyline points="320.5,1217.5 327.4,1213.1 358.2,1213.1 413.0,1215.5 481.5,1211.4 532.9,1212.4 574.0,1206.2 625.3,1205.2 663.0,1211.4 707.5,1207.3 738.4,1211.4 796.6,1202.8 834.2,1202.8 882.2,1199.4 900.0,1199.4 951.4,1197.0 1013.0,1193.2 1081.5,1194.9 1098.6,1198.7 1170.5,1197.7 1242.5,1198.7 1311.0,1195.3 1348.6,1201.1 1386.3,1195.3 1413.7,1191.5 1448.0,1190.8 1453.4,1187.6 1463.8,1191.0 1469.0,1186.7 1484.5,1185.9 1510.3,1184.5 1541.4,1182.8 1570.7,1183.6 1586.2,1180.7 1593.1,1184.1 1622.4,1181.9 1643.1,1179.7 1656.9,1181.4 1670.7,1183.3 1677.2,1180.2" fill="none" stroke="#4a55a8" stroke-width="1.4"/>
<path d="M3 1217.3H72M176 1217.3H205M286 1217.3H290" stroke="#6a6ab0" stroke-width="1.2"/>
<rect x="1170" y="1191" width="6" height="25" fill="#6b9be0"/>
<rect x="1744" y="63" width="8" height="1155" fill="#efefef"/>
<rect x="1744" y="63" width="8" height="40" fill="#868e98"/>
<rect x="1744" y="1023" width="8" height="40" fill="#868e98"/>
<rect x="0" y="0" width="1752" height="13" fill="#384044"/>
<rect x="1636" y="0" width="99" height="13" fill="#5e8a36"/>
<text x="1649.5" y="4.8" font-size="16" font-weight="bold" fill="#fff" textLength="71" lengthAdjust="spacingAndGlyphs">Anmelden</text>
<rect x="1750" y="0" width="2" height="6" fill="#8ab8e8"/>
<rect x="0" y="13" width="1752" height="50" fill="#5b6676"/>
<text x="37.5" y="44.2" font-size="20.3" fill="#e9ebee" textLength="44" lengthAdjust="spacingAndGlyphs" stroke="#e9ebee" stroke-width="0.55">Teilen</text>
<text x="126" y="44.2" font-size="20.3" fill="#e9ebee" textLength="56" lengthAdjust="spacingAndGlyphs" stroke="#e9ebee" stroke-width="0.55">Periode</text>
<text x="226.2" y="44.2" font-size="20.3" fill="#e9ebee" textLength="81" lengthAdjust="spacingAndGlyphs" stroke="#e9ebee" stroke-width="0.55">Zeitspanne</text>
<text x="352" y="44.2" font-size="20.3" fill="#e9ebee" textLength="50" lengthAdjust="spacingAndGlyphs" stroke="#e9ebee" stroke-width="0.55">Layout</text>
<text x="446.2" y="44.2" font-size="20.3" fill="#e9ebee" textLength="104.5" lengthAdjust="spacingAndGlyphs" stroke="#e9ebee" stroke-width="0.55">Eigenschaften</text>
<rect x="4" y="24.5" width="27" height="27.5" rx="4" fill="#e9ebee"/>
<g fill="#5b6676"><circle cx="23.4" cy="32.3" r="3.4"/><circle cx="12" cy="38" r="3.4"/><circle cx="23.4" cy="43.7" r="3.4"/></g>
<path d="M23.4 32.3L12 38L23.4 43.7" stroke="#5b6676" stroke-width="2.4" fill="none"/>
<circle cx="105.9" cy="38" r="12.2" fill="none" stroke="#e9ebee" stroke-width="2.6"/>
<path d="M105.6 29.5V38.2L111.3 44.2" fill="none" stroke="#e9ebee" stroke-width="2.2"/>
<circle cx="206.8" cy="37.8" r="12.2" fill="none" stroke="#e9ebee" stroke-width="2.6"/>
<path d="M206.8 37.8V28.499999999999996A9.3 9.3 0 0 1 212.78 44.92Z" fill="#e9ebee"/>
<rect x="317.6" y="23.8" width="13.5" height="13.4" rx="2.2" fill="#e9ebee"/>
<rect x="317.6" y="38.8" width="13.5" height="13.4" rx="2.2" fill="#e9ebee"/>
<rect x="332.6" y="23.8" width="13.5" height="13.4" rx="2.2" fill="#e9ebee"/>
<rect x="332.6" y="38.8" width="13.5" height="13.4" rx="2.2" fill="#e9ebee"/>
<g fill="#e9ebee"><rect x="422.7" y="24.000000000000004" width="6.6" height="7" rx="0.8" transform="rotate(0 426 38.2)"/><rect x="422.7" y="24.000000000000004" width="6.6" height="7" rx="0.8" transform="rotate(45 426 38.2)"/><rect x="422.7" y="24.000000000000004" width="6.6" height="7" rx="0.8" transform="rotate(90 426 38.2)"/><rect x="422.7" y="24.000000000000004" width="6.6" height="7" rx="0.8" transform="rotate(135 426 38.2)"/><rect x="422.7" y="24.000000000000004" width="6.6" height="7" rx="0.8" transform="rotate(180 426 38.2)"/><rect x="422.7" y="24.000000000000004" width="6.6" height="7" rx="0.8" transform="rotate(225 426 38.2)"/><rect x="422.7" y="24.000000000000004" width="6.6" height="7" rx="0.8" transform="rotate(270 426 38.2)"/><rect x="422.7" y="24.000000000000004" width="6.6" height="7" rx="0.8" transform="rotate(315 426 38.2)"/><circle cx="426" cy="38.2" r="10.3"/></g>
<circle cx="426" cy="38.2" r="4.6" fill="#5b6676"/>
</svg></body></html>
